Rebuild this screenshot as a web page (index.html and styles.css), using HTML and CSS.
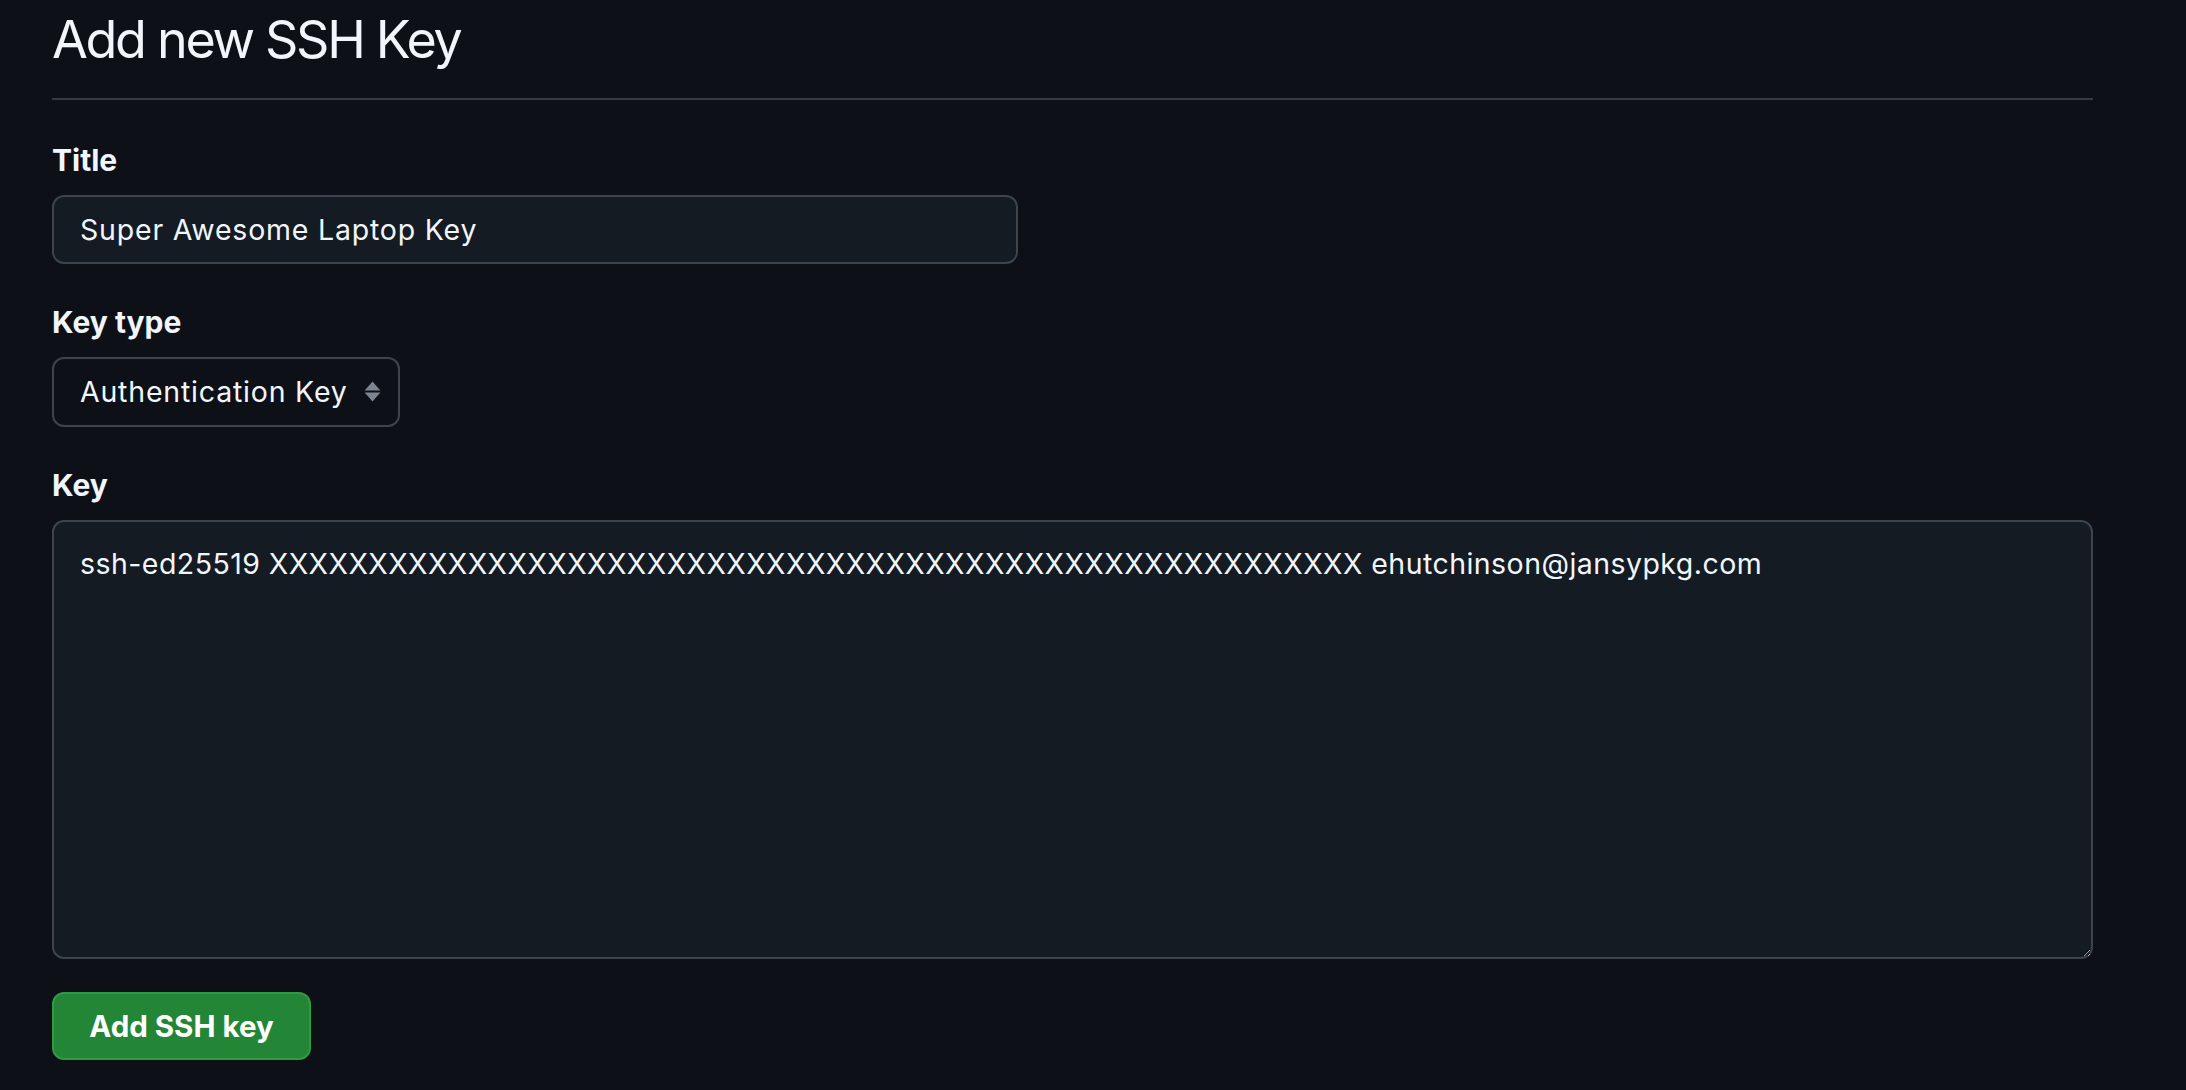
FILE: index.html
```html
<!DOCTYPE html>
<html lang="en">
<head>
<meta charset="utf-8">
<title>Add new SSH Key</title>
<link rel="stylesheet" href="styles.css">
</head>
<body>
<div class="page">
  <div class="subhead">
    <h2 class="subhead-heading">Add new SSH Key</h2>
  </div>
  <form class="ssh-form">
    <div class="form-group">
      <label class="form-label" for="ssh-title">Title</label>
      <input class="form-control title-input" id="ssh-title" type="text" value="Super Awesome Laptop Key">
    </div>
    <div class="form-group">
      <label class="form-label" for="ssh-type">Key type</label>
      <div class="select-wrap">
        <select class="form-select" id="ssh-type">
          <option>Authentication Key</option>
          <option>Signing Key</option>
        </select>
        <svg class="select-arrows" viewBox="0 0 17 21" width="17" height="21" aria-hidden="true">
          <path d="M8.5 0.6 L16.4 9.6 L0.6 9.6 Z"></path>
          <path d="M0.6 11.4 L16.4 11.4 L8.5 20.4 Z"></path>
        </svg>
      </div>
    </div>
    <div class="form-group">
      <label class="form-label" for="ssh-key">Key</label>
      <textarea class="form-control key-textarea" id="ssh-key">ssh-ed25519 XXXXXXXXXXXXXXXXXXXXXXXXXXXXXXXXXXXXXXXXXXXXXXXXXXXXXXX ehutchinson@jansypkg.com</textarea>
    </div>
    <button class="btn-primary" type="button">Add SSH key</button>
  </form>
</div>
</body>
</html>
```

FILE: styles.css
```css
html, body {
  margin: 0;
  padding: 0;
  background: #0d1117;
}

body {
  font-family: Inter, "Liberation Sans", sans-serif;
  color: #f0f6fc;
}

.page {
  padding: 8px 93px 0 52px;
}

.subhead {
  padding-bottom: 26px;
  border-bottom: 2px solid #353b44;
}

.subhead-heading {
  margin: 0;
  font-size: 52px;
  line-height: 64px;
  font-weight: 400;
  letter-spacing: -2.3px;
  color: #f0f6fc;
}

.ssh-form {
  display: flex;
  flex-direction: column;
  align-items: flex-start;
  padding-top: 39.5px;
}

.form-group {
  display: flex;
  flex-direction: column;
  align-items: flex-start;
  width: 100%;
  margin-bottom: 38.5px;
}

.form-group:nth-child(3) {
  margin-bottom: 33px;
}

.form-label {
  display: block;
  font-size: 30px;
  line-height: 40px;
  font-weight: 700;
  margin-bottom: 15px;
  color: #f0f6fc;
}

.form-control {
  box-sizing: border-box;
  font-family: Inter, "Liberation Sans", sans-serif;
  font-size: 28.5px;
  letter-spacing: 0.8px;
  color: #f0f6fc;
  background: #151b23;
  border: 2px solid #3d444d;
  border-radius: 12px;
  outline: none;
}

.title-input {
  width: 966px;
  height: 69px;
  padding: 0 26px;
}

.select-wrap {
  position: relative;
  width: 348px;
}

.form-select {
  box-sizing: border-box;
  width: 348px;
  height: 69.5px;
  padding: 0 50px 0 26px;
  font-family: Inter, "Liberation Sans", sans-serif;
  font-size: 28.5px;
  letter-spacing: 0.8px;
  color: #f0f6fc;
  background: #0d1117;
  border: 2px solid #3d444d;
  border-radius: 12px;
  outline: none;
  appearance: none;
  -webkit-appearance: none;
}

.select-arrows {
  position: absolute;
  right: 19px;
  top: 24px;
  fill: #7d8590;
  pointer-events: none;
}

.key-textarea {
  display: block;
  width: 100%;
  height: 439px;
  padding: 21px 26px;
  line-height: 42px;
  letter-spacing: 0.45px;
  resize: vertical;
  color-scheme: dark;
}

.btn-primary {
  box-sizing: border-box;
  height: 68px;
  width: 259px;
  padding: 0 30px;
  font-family: Inter, "Liberation Sans", sans-serif;
  font-size: 29.5px;
  font-weight: 700;
  color: #ffffff;
  background: #238636;
  border: 2px solid #2f9a45;
  border-radius: 12px;
  cursor: pointer;
}
```
